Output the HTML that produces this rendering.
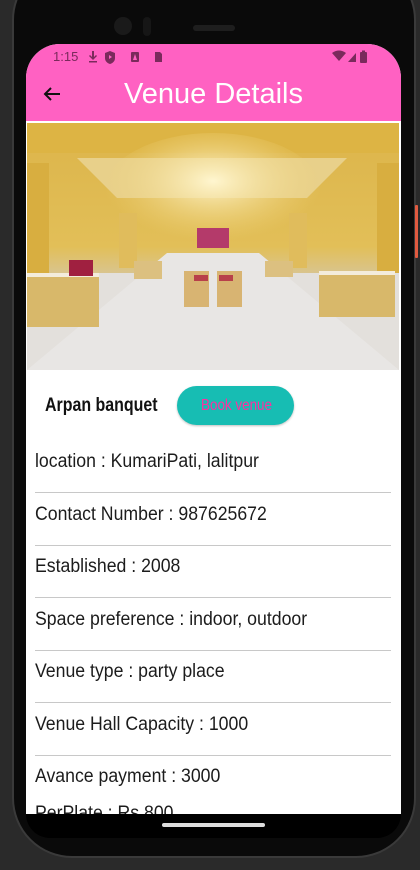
<!DOCTYPE html>
<html><head><meta charset="utf-8"><style>
*{margin:0;padding:0;box-sizing:border-box}
body{width:420px;height:870px;background:#2a2a2a;position:relative;overflow:hidden;font-family:"Liberation Sans",sans-serif}
.phone{position:absolute;left:12px;top:-40px;width:404px;height:898px;background:#0a0a0a;border-radius:60px;border:2px solid #3a3a3a}
.screen{position:absolute;left:26px;top:44px;width:375px;height:770px;background:#fff;border-radius:34px 34px 0 0;overflow:hidden}
.bar{position:absolute;left:0;top:0;width:375px;height:77px;background:#ff61c2}
.cond{display:inline-block;transform:scaleX(.84);transform-origin:left center;white-space:nowrap}
.row{position:absolute;left:9px;font-size:19px;color:#1c1c1c}
.row .cond{transform:scaleX(.93)}
.hr{position:absolute;left:9px;width:356px;height:1px;background:#c8c8c8}
</style></head><body>
<div class="phone"></div>
<div style="position:absolute;left:415px;top:205px;width:3px;height:53px;background:#e05a40;border-radius:1px"></div>
<div style="position:absolute;left:114px;top:17px;width:18px;height:18px;border-radius:50%;background:#1a1a1a"></div>
<div style="position:absolute;left:143px;top:17px;width:8px;height:19px;border-radius:4px;background:#161616"></div>
<div style="position:absolute;left:193px;top:25px;width:42px;height:6px;border-radius:3px;background:#1e1e1e"></div>
<div class="screen">
 <div class="bar">
  <div style="position:absolute;left:27px;top:5px;font-size:13px;color:#7a2a5c">1:15</div>
  <svg style="position:absolute;left:62px;top:6px" width="110" height="14" fill="#7a2a5c">
   <path d="M4 1h2v6l2-2 1 1-4 4-4-4 1-1 2 2z M1 11h8v1.5H1z"/>
   <path d="M22 1l5 2v5c0 3-2 5-5 6-3-1-5-3-5-6V3z" /><path d="M21 5l3 2-3 2z" fill="#ff61c2"/>
   <rect x="43" y="2" width="8" height="10" rx="1"/><path d="M45 10l2-6 2 6z" fill="#ff61c2"/>
   <path d="M67 2h5l2 2v8h-7z"/>
  </svg>
  <svg style="position:absolute;left:306px;top:6px" width="50" height="14" fill="#7a2a5c">
   <path d="M0 3q7-5 14 0l-7 8z"/><path d="M16 12l8-9v9z"/><rect x="28" y="2" width="7" height="11" rx="1"/><rect x="30" y="0.5" width="3" height="2"/>
  </svg>
  <svg style="position:absolute;left:17px;top:42px" width="18" height="16" fill="none" stroke="#111" stroke-width="2"><path d="M17 8H2M8 2L2 8l6 6"/></svg>
  <div style="position:absolute;left:0;width:375px;top:34px;text-align:center;color:#fff;font-size:29px">Venue Details</div>
 </div>
 <svg style="position:absolute;left:1px;top:79px" width="372" height="247" viewBox="0 0 372 247">
  <defs>
   <linearGradient id="w" x1="0" y1="0" x2="0" y2="1"><stop offset="0" stop-color="#dcb44a"/><stop offset=".5" stop-color="#e2bf58"/><stop offset=".62" stop-color="#d8c594"/><stop offset="1" stop-color="#e9e6e2"/></linearGradient>
   <radialGradient id="g" cx=".5" cy=".4" r=".5"><stop offset="0" stop-color="#fff6d0"/><stop offset="1" stop-color="#f0d47a" stop-opacity="0"/></radialGradient>
  </defs>
  <rect width="372" height="247" fill="url(#w)"/>
  <rect y="0" width="372" height="30" fill="#ddb444"/>
  <path d="M50 35h270l-40 40H90z" fill="#e8d08a"/>
  <ellipse cx="186" cy="70" rx="110" ry="60" fill="url(#g)"/>
  <polygon points="0,150 372,150 372,247 0,247" fill="#e3e0dc"/>
  <polygon points="140,130 232,130 372,247 0,247" fill="#e8e6e4"/>
  <rect x="0" y="40" width="22" height="110" fill="#d8ae40"/><rect x="350" y="40" width="22" height="110" fill="#d8ae40"/>
  <rect x="92" y="90" width="18" height="55" fill="#e0bc5c"/><rect x="262" y="90" width="18" height="55" fill="#e0bc5c"/>
  <rect x="170" y="105" width="32" height="20" fill="#b43a6a"/>
  <rect x="0" y="152" width="72" height="52" fill="#d8b86a"/><rect x="0" y="150" width="72" height="4" fill="#f3ecdc"/>
  <rect x="292" y="150" width="76" height="44" fill="#d8b86a"/><rect x="292" y="148" width="76" height="4" fill="#f3ecdc"/>
  <rect x="107" y="138" width="28" height="18" fill="#dcc080"/><rect x="238" y="138" width="28" height="16" fill="#dcc080"/>
  <rect x="42" y="137" width="24" height="16" fill="#a02040"/>
  <rect x="157" y="148" width="25" height="36" fill="#d8b472"/><rect x="190" y="148" width="25" height="36" fill="#d8b472"/>
  <rect x="167" y="152" width="14" height="6" fill="#b8404a"/><rect x="192" y="152" width="14" height="6" fill="#b8404a"/>
 </svg>
 <div style="position:absolute;left:19px;top:351px;font-size:19px;font-weight:bold;color:#111"><span class="cond">Arpan banquet</span></div>
 <div style="position:absolute;left:151px;top:342px;width:117px;height:39px;border-radius:20px;background:#17bdb3;box-shadow:0 1px 2px rgba(0,0,0,.25)"><div style="position:absolute;left:24px;top:11px;font-size:16px;color:#ff2fa0"><span class="cond">Book venue</span></div></div>
 <div class="row" style="top:407px"><span class="cond">location : KumariPati, lalitpur</span></div>
 <div class="hr" style="top:448px"></div>
 <div class="row" style="top:460px"><span class="cond">Contact Number : 987625672</span></div>
 <div class="hr" style="top:501px"></div>
 <div class="row" style="top:512px"><span class="cond">Established : 2008</span></div>
 <div class="hr" style="top:553px"></div>
 <div class="row" style="top:565px"><span class="cond">Space preference : indoor, outdoor</span></div>
 <div class="hr" style="top:606px"></div>
 <div class="row" style="top:617px"><span class="cond">Venue type : party place</span></div>
 <div class="hr" style="top:658px"></div>
 <div class="row" style="top:670px"><span class="cond">Venue Hall Capacity : 1000</span></div>
 <div class="hr" style="top:711px"></div>
 <div class="row" style="top:722px"><span class="cond">Avance payment : 3000</span></div>
 <div class="row" style="top:759px"><span class="cond">PerPlate : Rs 800</span></div>
</div>
<div style="position:absolute;left:26px;top:814px;width:375px;height:24px;background:#000;border-radius:0 0 30px 30px"></div>
<div style="position:absolute;left:162px;top:823px;width:103px;height:4px;border-radius:2px;background:#ddd"></div>
</body></html>
